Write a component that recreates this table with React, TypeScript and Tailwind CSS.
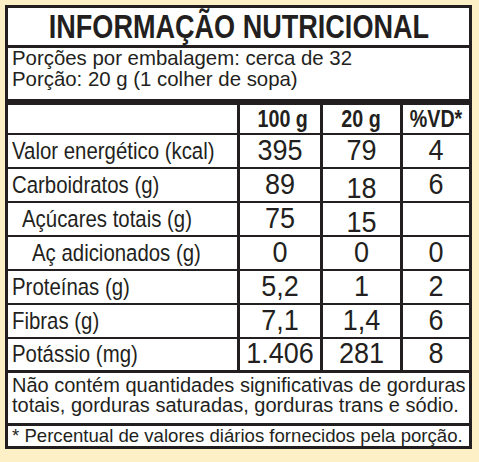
import React from 'react';

interface NutrientRow {
  label: string;
  indent?: number;
  per100: string;
  perPortion: string;
  vd: string;
  lowerPortion?: boolean;
}

const rows: NutrientRow[] = [
  { label: 'Valor energético (kcal)', per100: '395', perPortion: '79', vd: '4' },
  { label: 'Carboidratos (g)', per100: '89', perPortion: '18', vd: '6', lowerPortion: true },
  { label: 'Açúcares totais (g)', indent: 1, per100: '75', perPortion: '15', vd: '', lowerPortion: true },
  { label: 'Aç adicionados (g)', indent: 2, per100: '0', perPortion: '0', vd: '0' },
  { label: 'Proteínas (g)', per100: '5,2', perPortion: '1', vd: '2' },
  { label: 'Fibras (g)', per100: '7,1', perPortion: '1,4', vd: '6' },
  { label: 'Potássio (mg)', per100: '1.406', perPortion: '281', vd: '8' },
];

export default function App() {
  return (
    <div className="w-[479px] h-[462px] bg-[#fdf0c6] pl-[5px] pt-[5px] font-['Liberation_Sans',Arial,sans-serif] text-[#231f20]">
      <div className="w-[467px] h-[444px] border-[3px] border-[#231f20] bg-white flex flex-col">
        {/* Title, condensed bold */}
        <div className="h-[40px] border-b-[3px] border-[#231f20] flex items-center justify-center font-bold text-[33px] leading-none">
          <span className="whitespace-nowrap scale-x-[0.82]">INFORMAÇÃO NUTRICIONAL</span>
        </div>

        {/* Servings */}
        <div className="h-[57px] border-b-[6px] border-[#231f20] pl-1 text-[20.4px] leading-[21px]">
          <div>Porções por embalagem: cerca de 32</div>
          <div>Porção: 20 g (1 colher de sopa)</div>
        </div>

        {/* Header */}
        <div className="h-[30px] border-b-2 border-[#231f20] grid grid-cols-[232px_83px_80px_66px] font-bold text-[24px] leading-none">
          <div className="border-r-[3px] border-[#231f20]" />
          <div className="border-r-[3px] border-[#231f20] flex items-center justify-center">
            <span className="whitespace-nowrap scale-x-[0.82] translate-x-[3px]">100 g</span>
          </div>
          <div className="border-r-[3px] border-[#231f20] flex items-center justify-center">
            <span className="whitespace-nowrap scale-x-[0.82]">20 g</span>
          </div>
          <div className="flex items-center justify-center">
            <span className="whitespace-nowrap scale-x-[0.82]">%VD*</span>
          </div>
        </div>

        {/* Nutrient rows */}
        {rows.map((row, i) => (
          <div
            key={row.label}
            className={`h-[34px] grid grid-cols-[232px_83px_80px_66px] border-[#231f20] ${
              i === rows.length - 1 ? 'border-b-[3px]' : 'border-b-2'
            }`}
          >
            <div
              className={`border-r-[3px] border-[#231f20] flex items-center text-[20.4px] leading-none ${
                row.indent === 2 ? 'pl-[24px]' : row.indent === 1 ? 'pl-[14px]' : 'pl-1'
              }`}
            >
              <span className="whitespace-nowrap scale-y-[1.2]">{row.label}</span>
            </div>
            <div className="border-r-[3px] border-[#231f20] flex items-center justify-center text-[27px] leading-none">
              <span className="whitespace-nowrap scale-y-[1.1] -translate-y-[1px]">{row.per100}</span>
            </div>
            <div className="border-r-[3px] border-[#231f20] flex items-center justify-center text-[27px] leading-none">
              <span className={`scale-y-[1.1] ${row.lowerPortion ? 'translate-y-[3px]' : '-translate-y-[1px]'}`}>
                {row.perPortion}
              </span>
            </div>
            <div className="flex items-center justify-center text-[27px] leading-none">
              <span className="scale-y-[1.1] -translate-y-[1px]">{row.vd}</span>
            </div>
          </div>
        ))}

        {/* Note */}
        <div className="h-[53px] border-b-[3px] border-[#231f20] pl-1 pt-[2px] text-[20px] leading-[20px]">
          <div>Não contém quantidades significativas de gorduras</div>
          <div>totais, gorduras saturadas, gorduras trans e sódio.</div>
        </div>

        {/* Footnote */}
        <div className="flex-1 pl-1 text-[18.6px] leading-[20px]">
          * Percentual de valores diários fornecidos pela porção.
        </div>
      </div>
    </div>
  );
}
